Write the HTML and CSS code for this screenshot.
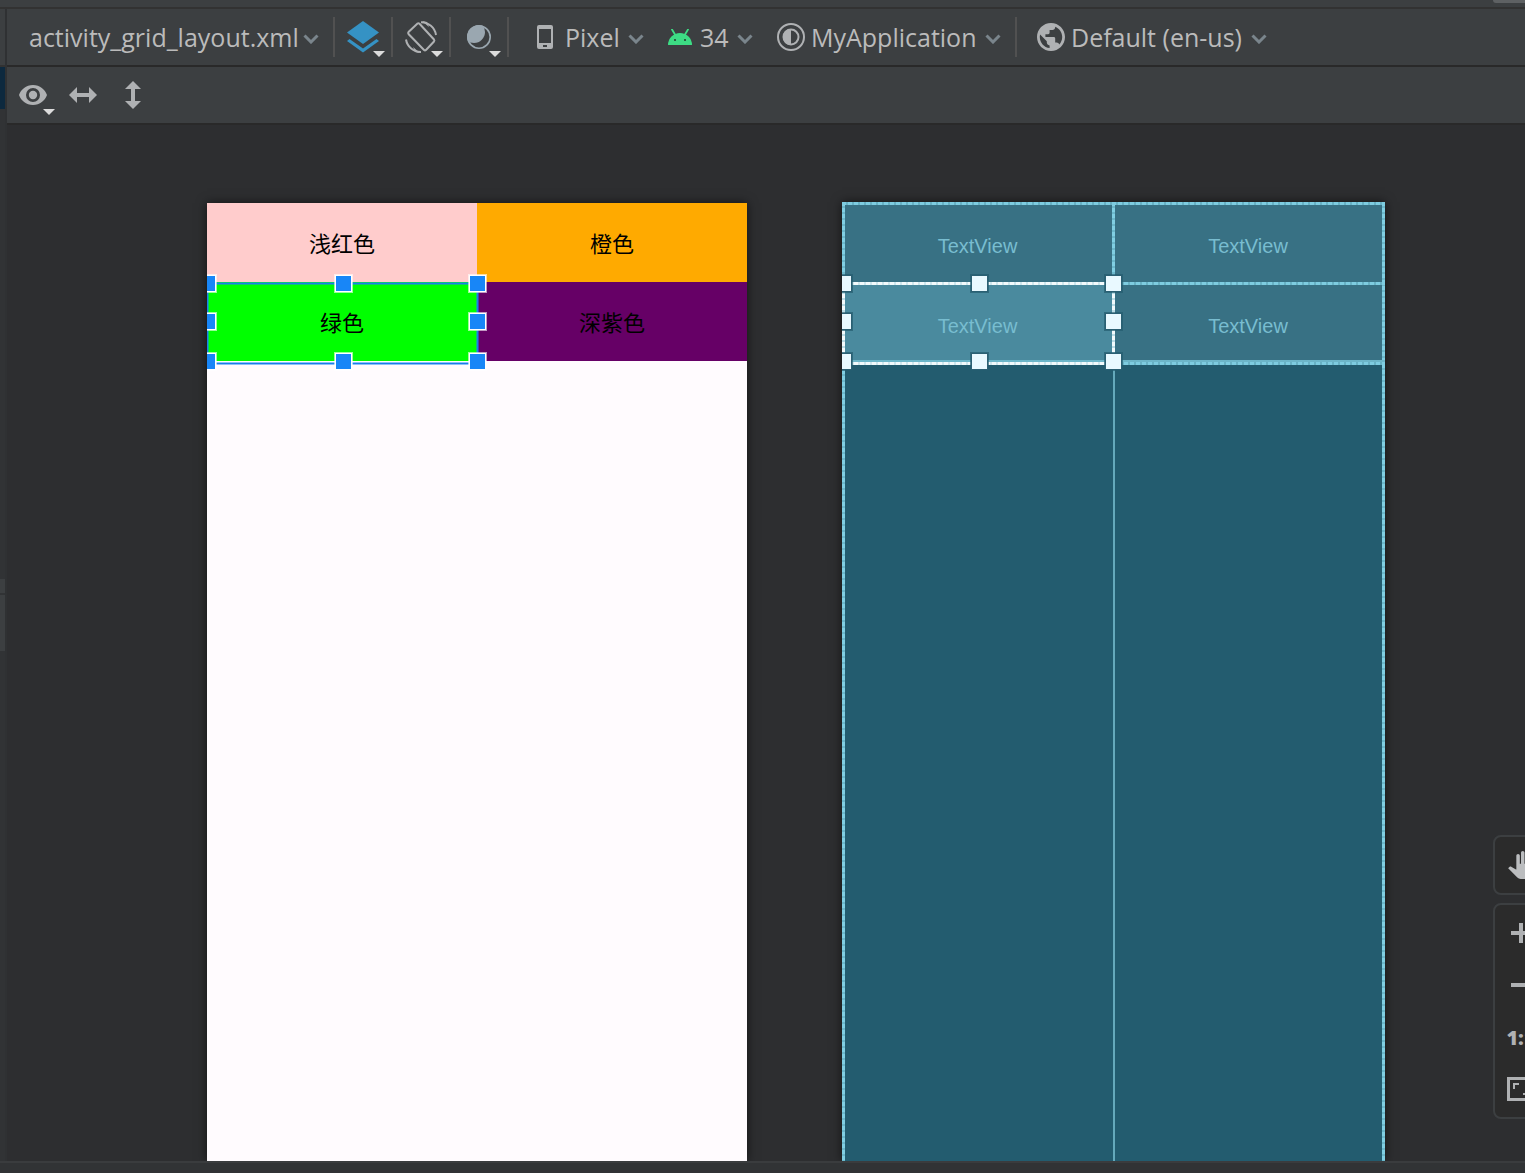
FILE: index.html
```html
<!DOCTYPE html>
<html lang="en">
<head>
<meta charset="utf-8">
<title>activity_grid_layout.xml</title>
<link rel="stylesheet" href="styles.css">
</head>
<body>
<svg class="defs" aria-hidden="true">
  <symbol id="chevron" viewBox="0 0 16 10"><path d="M1.500 1.500L8 8l6.500-6.500" fill="none" stroke="#7a858c" stroke-width="3"/></symbol>
  <symbol id="more" viewBox="0 0 12 6"><path d="M0 0h12L6 6z" fill="#dcdcdc"/></symbol>
</svg>
<div class="window-edge"><span class="edge-tab"></span></div>
<div class="workspace">
  <aside class="rail">
    <div class="rail-head"></div>
    <div class="rail-active"></div>
    <div class="rail-block"></div>
    <div class="rail-block tall"></div>
  </aside>
  <main class="editor">
    <div class="toolbar">
      <label class="field file">
        <select aria-label="Layout file"><option>activity_grid_layout.xml</option></select>
        <svg class="chevron"><use href="#chevron"/></svg>
      </label>
      <span class="separator"></span>
      <button class="tool" aria-label="Select design surface">
        <svg width="32" height="32" viewBox="0 0 32 32" fill="#3592c4"><path d="M16 0l16 11.500L16 23 0 11.500z"/><path d="M2.500 18L16 27.500 29.500 18l2.500 2-16 11.500L0 20z"/></svg>
        <svg class="more"><use href="#more"/></svg>
      </button>
      <span class="separator"></span>
      <button class="tool" aria-label="Orientation">
        <svg width="32" height="32" viewBox="0 0 32 32" fill="none" stroke="#afb1b3" stroke-width="2"><path d="M12.500 2.500Q13.500 1.800 14.500 2.800L29 18.500q.8 1 0 2l-8 8.500q-1 .8-2 0L3.500 13q-.8-1 0-2z"/><path d="M16 1.200A15 15 0 0 1 31 14M1 18.500A15 15 0 0 0 16 31"/><path d="M17 0l7 6-2-5zM15 32l-7-6 2 5z" fill="#afb1b3" stroke="none"/></svg>
        <svg class="more"><use href="#more"/></svg>
      </button>
      <span class="separator"></span>
      <button class="tool" aria-label="Night mode">
        <svg width="24" height="24" viewBox="0 0 24 24"><clipPath id="moon"><circle cx="7" cy="7" r="11"/></clipPath><circle cx="12" cy="12" r="11.200" fill="none" stroke="#9aa7b0" stroke-width="1.600"/><circle cx="12" cy="12" r="12" fill="#9aa7b0" clip-path="url(#moon)"/></svg>
        <svg class="more"><use href="#more"/></svg>
      </button>
      <span class="separator"></span>
      <label class="field device-type">
        <svg class="phone" width="16" height="24" viewBox="0 0 16 24"><path fill="#afb1b3" fill-rule="evenodd" d="M2 0h12a2 2 0 0 1 2 2v20a2 2 0 0 1-2 2H2a2 2 0 0 1-2-2V2a2 2 0 0 1 2-2zm0 4v14h12V4zm4 16v2h4v-2z"/></svg>
        <select aria-label="Device"><option>Pixel</option></select>
        <svg class="chevron"><use href="#chevron"/></svg>
      </label>
      <label class="field api">
        <svg width="24" height="16" viewBox="0 0 24 16"><path d="M4 .5l3 5M20 .5l-3 5" stroke="#3ddc84" stroke-width="1.800" stroke-linecap="round"/><path fill="#3ddc84" d="M0 16a12 12 0 0 1 24 0z"/><path fill="#2b5d43" d="M6 10h2v2H6zM16 10h2v2h-2z"/></svg>
        <select aria-label="API version"><option>34</option></select>
        <svg class="chevron"><use href="#chevron"/></svg>
      </label>
      <label class="field theme">
        <svg width="28" height="28" viewBox="0 0 28 28" fill="none" stroke="#afb1b3" stroke-width="2"><circle cx="14" cy="14" r="13"/><circle cx="14" cy="14" r="7.500"/><path d="M14 6a8 8 0 0 0 0 16z" fill="#afb1b3" stroke="none"/></svg>
        <select aria-label="Theme"><option>MyApplication</option></select>
        <svg class="chevron"><use href="#chevron"/></svg>
      </label>
      <span class="separator"></span>
      <label class="field locale">
        <svg width="28" height="28" viewBox="2 2 20 20"><path fill="#afb1b3" d="M12 2C6.480 2 2 6.480 2 12s4.480 10 10 10 10-4.480 10-10S17.520 2 12 2zm-1 17.930c-3.950-.49-7-3.850-7-7.930 0-.62.080-1.210.210-1.790L9 15v1c0 1.100.9 2 2 2v1.930zm6.900-2.540c-.26-.81-1-1.390-1.900-1.390h-1v-3c0-.55-.45-1-1-1H8v-2h2c.55 0 1-.45 1-1V7h2c1.100 0 2-.9 2-2v-.41c2.930 1.190 5 4.060 5 7.410 0 2.080-.8 3.970-2.100 5.390z"/></svg>
        <select aria-label="Locale"><option>Default (en-us)</option></select>
        <svg class="chevron"><use href="#chevron"/></svg>
      </label>
    </div>
    <div class="toolbar view-bar">
      <button class="view-tool" aria-label="View options">
        <svg width="28" height="20" viewBox="0 0 28 20"><path fill="#afb1b3" fill-rule="evenodd" d="M14 0C7 0 2 4.500 0 10c2 5.500 7 10 14 10s12-4.500 14-10C26 4.500 21 0 14 0zm0 3a7 7 0 1 1 0 14 7 7 0 0 1 0-14z"/><circle cx="14" cy="10" r="4.200" fill="#afb1b3"/></svg>
        <svg class="more"><use href="#more"/></svg>
      </button>
      <button class="view-tool" aria-label="Expand horizontally">
        <svg width="28" height="16" viewBox="0 0 28 16"><path fill="#afb1b3" d="M0 8l8-8v6h12V0l8 8-8 8v-6H8v6z"/></svg>
      </button>
      <button class="view-tool" aria-label="Expand vertically">
        <svg width="16" height="28" viewBox="0 0 16 28"><path fill="#afb1b3" d="M8 0l8 8h-6v12h6l-8 8-8-8h6V8H0z"/></svg>
      </button>
    </div>
    <section class="surface">
      <div class="preview">
        <div class="cell pink">浅红色</div>
        <div class="cell orange">橙色</div>
        <div class="cell green">绿色</div>
        <div class="cell purple">深紫色</div>
        <div class="selection">
          <i class="handle n w"></i><i class="handle n c"></i><i class="handle n e"></i>
          <i class="handle m w"></i><i class="handle m e"></i>
          <i class="handle s w"></i><i class="handle s c"></i><i class="handle s e"></i>
        </div>
      </div>
      <div class="blueprint">
        <div class="wire">TextView</div>
        <div class="wire">TextView</div>
        <div class="wire selected">TextView</div>
        <div class="wire">TextView</div>
        <div class="rule frame-left"></div>
        <div class="rule frame-right"></div>
        <div class="rule column"></div>
        <div class="rule column-rest"></div>
        <div class="rule row-1"></div>
        <div class="rule row-2"></div>
        <div class="rule row-3"></div>
        <div class="rule row-3-edge"></div>
        <div class="selection">
          <i class="handle n w"></i><i class="handle n c"></i><i class="handle n e"></i>
          <i class="handle m w"></i><i class="handle m e"></i>
          <i class="handle s w"></i><i class="handle s c"></i><i class="handle s e"></i>
        </div>
      </div>
      <div class="zoom-controls">
        <div class="panel">
          <button aria-label="Pan"><svg width="28" height="28" viewBox="0 0 24 24"><path fill="#bbbdbf" d="M23 5.500V20c0 2.200-1.800 4-4 4h-7.300c-1.080 0-2.100-.43-2.850-1.190L1 14.830s1.260-1.230 1.300-1.250c.22-.19.490-.29.790-.29.220 0 .42.060.6.160.040.010 4.310 2.460 4.310 2.460V4c0-.83.67-1.500 1.500-1.500S11 3.170 11 4v7h1V1.500c0-.83.67-1.500 1.500-1.500S15 .67 15 1.500V11h1V2.500c0-.83.67-1.500 1.500-1.500s1.500.67 1.500 1.500V11h1V5.500c0-.83.67-1.500 1.500-1.500s1.500.67 1.500 1.500z"/></svg></button>
        </div>
        <div class="panel">
          <button aria-label="Zoom in"><svg width="20" height="20" viewBox="0 0 20 20"><path fill="#afb1b3" d="M8 0h4v8h8v4h-8v8H8v-8H0V8h8z"/></svg></button>
          <button aria-label="Zoom out"><svg width="20" height="4" viewBox="0 0 20 4"><path fill="#afb1b3" d="M0 0h20v4H0z"/></svg></button>
          <button aria-label="Zoom to 100%">1:1</button>
          <button aria-label="Zoom to fit"><svg width="28" height="24" viewBox="0 0 28 24"><path fill="none" stroke="#afb1b3" stroke-width="3" d="M1.500 1.500h25v21h-25z"/><path fill="none" stroke="#afb1b3" stroke-width="2" d="M7 12V7h5M16 17h5v-5"/></svg></button>
        </div>
      </div>
    </section>
  </main>
</div>
<footer class="status-edge"></footer>
</body>
</html>
```
FILE: styles.css
```css
* { box-sizing: border-box; }

body {
  display: flex;
  flex-direction: column;
  min-height: 100vh;
  margin: 0;
  background: #2d2e30;
  color: #bbbbbb;
  font-family: "Open Sans", "Noto Sans", sans-serif;
  font-size: 25px;
}

.defs { display: none; }

button, select {
  appearance: none;
  margin: 0;
  padding: 0;
  border: 0;
  background: none;
  color: inherit;
  font: inherit;
}

.window-edge {
  display: flex;
  justify-content: flex-end;
  height: 9px;
  background: #3c3f41;
  border-bottom: 2px solid #323232;
}

.edge-tab {
  width: 32px;
  height: 3px;
  border-bottom-left-radius: 3px;
  background: #5e6163;
}

.workspace { display: flex; flex: 1; }

.rail {
  width: 7px;
  border-right: 2px solid #2f3133;
  background: #313335;
}

.rail-head { height: 58px; background: #3c3f41; border-bottom: 2px solid #323232; }
.rail-active { height: 42px; margin-bottom: 470px; background: #0d293e; }
.rail-block { height: 14px; margin-bottom: 2px; background: #3c3f41; }
.rail-block.tall { height: 56px; }

.editor { display: flex; flex: 1; flex-direction: column; min-width: 0; }

.toolbar {
  display: flex;
  align-items: center;
  height: 58px;
  background: #3c3f41;
  border-bottom: 2px solid #292929;
}

.separator { width: 2px; height: 40px; background: #515151; }

.field { display: flex; align-items: center; gap: 8px; padding: 0 8px; white-space: nowrap; }
.field select { flex: 1; }
.field svg { flex: none; }
.file { min-width: 326px; padding: 0 14px 0 22px; gap: 4px; }
.device-type { min-width: 122px; margin-left: 20px; }
.phone { margin-right: 4px; }
.api { min-width: 100px; margin-left: 8px; }
.theme { min-width: 240px; margin: 0 6px 0 8px; gap: 6px; }
.locale { min-width: 246px; margin-left: 12px; gap: 6px; }

.chevron { width: 16px; height: 10px; margin-top: 4px; }

.tool, .view-tool {
  position: relative;
  display: flex;
  align-items: center;
  justify-content: center;
}
.tool { width: 56px; height: 56px; }
.view-tool { width: 28px; height: 40px; }
.more { position: absolute; width: 12px; height: 6px; }
.tool .more { right: 6px; bottom: 8px; }
.view-tool .more { right: -8px; bottom: 0; }

.view-bar { gap: 22px; padding-left: 12px; }

.surface {
  position: relative;
  display: flex;
  flex: 1;
  gap: 95px;
  padding: 77px 0 0 200px;
  overflow: hidden;
}

.preview, .blueprint {
  position: relative;
  display: grid;
  flex: none;
  align-content: start;
  box-shadow: 0 0 10px rgba(0, 0, 0, 0.6);
}

/* The left handles are cut at the device edge, while the shadow stays visible. */
.selection { position: absolute; clip-path: inset(-12px -12px -12px 0); }

.preview {
  grid-template-columns: 270px 270px;
  grid-auto-rows: 79px;
  margin-top: 1px;
  background: #fffbfe;
  color: #000000;
  font: 22px "Noto Sans CJK SC", sans-serif;
}

.cell { display: flex; align-items: center; justify-content: center; padding-bottom: 2px; }
.pink { background: #ffcccc; }
.orange { background: #ffaa00; }
.green { background: #00ff00; }
.purple { background: #660066; }

.preview .selection {
  left: 0;
  top: 80px;
  width: 271px;
  height: 81px;
  border: 1px solid #1a7fe8;
  box-shadow: 0 0 0 1px rgba(24, 134, 247, 0.5), inset 0 0 0 1px rgba(24, 134, 247, 0.5);
}

.handle {
  position: absolute;
  width: 17px;
  height: 17px;
  margin: -8px;
  border: 1px solid #ffffff;
  background: #1886f7;
  box-shadow: 0 0 0 1px rgba(255, 255, 255, 0.6);
}
.handle.n { top: -1px; }
.handle.m { top: 37px; }
.handle.s { top: 77px; }
.handle.w { left: -1px; }
.handle.c { left: 135px; }
.handle.e { left: 269px; }

.blueprint {
  grid-template-columns: 271px 270px;
  grid-auto-rows: 80px;
  width: 543px;
  padding-top: 1px;
  background: #235c6f;
  color: #78bdd0;
  font: 20px "Liberation Sans", Arial, sans-serif;
}

.wire { display: flex; align-items: center; justify-content: center; padding-top: 6px; background: #387184; }
.wire.selected { background: #4a8a9e; }

.rule { position: absolute; background: #76c6da; }
.frame-left, .frame-right, .column {
  top: 0;
  width: 3px;
  background: repeating-linear-gradient(#80cee2 0 4px, #6cb8cb 4px 6px);
}
.frame-left { left: 0; bottom: 0; }
.frame-right { right: 0; bottom: 0; }
.column { left: 270px; height: 163px; }
.column-rest { left: 271px; top: 163px; bottom: 0; width: 2px; background: #65a9bb; }
.row-1, .row-2, .row-3 {
  left: 0;
  right: 0;
  height: 3px;
  background: repeating-linear-gradient(90deg, #7ecce0 0 4px, #68b2c5 4px 6px);
}
.row-1 { top: 0; }
.row-2 { top: 80px; }
.row-3 { top: 160px; }
.row-3-edge { left: 0; right: 0; top: 158px; height: 2px; background: #6db6c9; }

.blueprint .selection {
  left: 0;
  top: 80px;
  width: 273px;
  height: 83px;
  background:
    repeating-linear-gradient(90deg, #f2fafc 0 4px, #cfe8ef 4px 6px) top / 100% 3px no-repeat,
    repeating-linear-gradient(90deg, #f2fafc 0 4px, #cfe8ef 4px 6px) bottom / 100% 3px no-repeat,
    repeating-linear-gradient(#f2fafc 0 4px, #bcdde6 4px 6px) left / 3px 100% no-repeat,
    repeating-linear-gradient(#f2fafc 0 4px, #bcdde6 4px 6px) right / 3px 100% no-repeat;
}
.blueprint .handle {
  border-color: #2b6073;
  background: #e9f9ff;
  box-shadow: 0 0 0 1px rgba(35, 92, 111, 0.7);
}
.blueprint .handle.n { top: 1px; }
.blueprint .handle.m { top: 39px; }
.blueprint .handle.s { top: 79px; }
.blueprint .handle.w { left: 1px; }
.blueprint .handle.c { left: 137px; }
.blueprint .handle.e { left: 271px; }

.zoom-controls {
  position: absolute;
  right: -24px;
  bottom: 42px;
  display: flex;
  flex-direction: column;
  gap: 8px;
}
.panel {
  display: flex;
  flex-direction: column;
  width: 56px;
  padding: 2px 0;
  border: 2px solid #3c3f41;
  border-radius: 8px;
  background: #2b2b2b;
}
.panel button {
  display: flex;
  align-items: center;
  justify-content: center;
  height: 52px;
  color: #afb1b3;
  font-size: 20px;
  font-weight: 800;
}

.status-edge { height: 12px; background: #313335; border-top: 2px solid #3a3c3e; }
```
